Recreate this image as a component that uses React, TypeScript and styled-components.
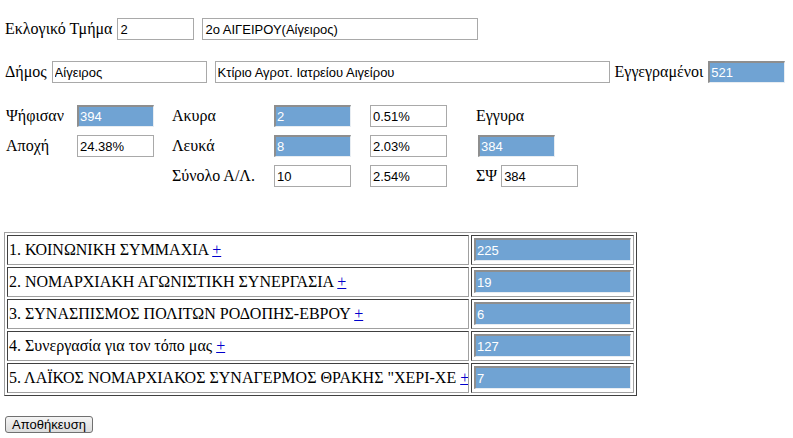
import React from "react";
import styled, { createGlobalStyle } from "styled-components";

const Global = createGlobalStyle`
  html, body { margin: 0; padding: 0; background: #fff; }
  body { font-family: "Liberation Serif", "Times New Roman", serif; font-size: 16px; color: #000; }
`;

const Page = styled.div`
  display: flex;
  flex-direction: column;
  padding: 18px 0 0 5px;
`;

const Row = styled.div<{ $mt?: number }>`
  display: flex;
  align-items: center;
  height: 22px;
  margin-top: ${(p) => p.$mt ?? 0}px;
`;

const Label = styled.span<{ $ml?: number }>`
  font-family: "Liberation Serif", "Times New Roman", serif;
  font-size: 16px;
  margin-left: ${(p) => p.$ml ?? 0}px;
  white-space: nowrap;
`;

const Field = styled.input<{ $w?: number; $blue?: boolean; $ml?: number }>`
  box-sizing: border-box;
  width: ${(p) => p.$w ?? 77}px;
  height: 22px;
  margin: 0 0 0 ${(p) => p.$ml ?? 0}px;
  padding: 0 2px;
  font-family: "Liberation Sans", Arial, sans-serif;
  font-size: 13px;
  outline: none;
  ${(p) =>
    p.$blue
      ? `
    background: #70a3d3;
    color: #fff;
    border-style: solid;
    border-width: 2px 1px 1px 2px;
    border-color: #8e8e8e #e8edf2 #e8edf2 #8e8e8e;
    padding-left: 1px;
  `
      : `
    background: #fff;
    color: #000;
    border: 1px solid #a9a9a9;
  `}
`;

const Stats = styled.div`
  display: grid;
  grid-template-columns: 71px 95px 102px 96px 106px auto;
  grid-auto-rows: 22px;
  row-gap: 8px;
  align-items: center;
  margin-top: 22px;
  margin-left: 1px;
`;

const Cell = styled.div`
  display: flex;
  align-items: center;
`;

const Table = styled.table`
  margin-top: 45px;
  margin-left: -1px;
  border-collapse: separate;
  border-spacing: 2px;
  border-style: solid;
  border-width: 1px;
  border-color: #a0a0a0 #404040 #404040 #a0a0a0;
  width: 633px;
`;

const NameCell = styled.td`
  border-style: solid;
  border-width: 1px;
  border-color: #404040 #a0a0a0 #a0a0a0 #404040;
  padding: 0 0 0 1px;
  width: 459px;
  height: 28px;
  white-space: nowrap;
  overflow: hidden;
  font-family: "Liberation Serif", "Times New Roman", serif;
  font-size: 16px;
  vertical-align: middle;
  max-width: 459px;
`;

const VoteCell = styled.td`
  border-style: solid;
  border-width: 1px;
  border-color: #404040 #a0a0a0 #a0a0a0 #404040;
  padding: 2px 2px 3px 2px;
  vertical-align: top;
`;

const VoteInput = styled(Field)`
  display: block;
  width: 157px;
  height: 23px;
`;

const Plus = styled.a`
  color: #0000cc;
  text-decoration: underline;
`;

const SaveButton = styled.button`
  align-self: flex-start;
  margin-top: 20px;
  height: 17px;
  width: 88px;
  padding: 0;
  font-family: "Liberation Sans", Arial, sans-serif;
  font-size: 13px;
  color: #000;
  border: 1px solid #707070;
  border-radius: 3px;
  background: linear-gradient(#f4f4f4, #dcdcdc);
  line-height: 15px;
`;

const parties = [
  { name: "1. ΚΟΙΝΩΝΙΚΗ ΣΥΜΜΑΧΙΑ", v: "225" },
  { name: "2. ΝΟΜΑΡΧΙΑΚΗ ΑΓΩΝΙΣΤΙΚΗ ΣΥΝΕΡΓΑΣΙΑ", v: "19" },
  { name: "3. ΣΥΝΑΣΠΙΣΜΟΣ ΠΟΛΙΤΩΝ ΡΟΔΟΠΗΣ-ΕΒΡΟΥ", v: "6" },
  { name: "4. Συνεργασία για τον τόπο μας", v: "127" },
  { name: "5. ΛΑΪΚΟΣ ΝΟΜΑΡΧΙΑΚΟΣ ΣΥΝΑΓΕΡΜΟΣ ΘΡΑΚΗΣ \"ΧΕΡΙ-ΧΕ", v: "7" },
];

export default function App() {
  return (
    <>
      <Global />
      <Page>
        <Row>
          <Label>Εκλογικό Τμήμα</Label>
          <Field $ml={5} defaultValue="2" />
          <Field $ml={8} $w={276} defaultValue="2ο ΑΙΓΕΙΡΟΥ(Αίγειρος)" />
        </Row>
        <Row $mt={21}>
          <Label>Δήμος</Label>
          <Field $ml={5} $w={155} defaultValue="Αίγειρος" />
          <Field $ml={8} $w={395} defaultValue="Κτίριο Αγροτ. Ιατρείου Αιγείρου" />
          <Label $ml={5}>Εγγεγραμένοι</Label>
          <Field $ml={5} $blue defaultValue="521" />
        </Row>
        <Stats>
          <Cell><Label>Ψήφισαν</Label></Cell>
          <Cell><Field $blue defaultValue="394" /></Cell>
          <Cell><Label>Ακυρα</Label></Cell>
          <Cell><Field $blue defaultValue="2" /></Cell>
          <Cell><Field defaultValue="0.51%" /></Cell>
          <Cell><Label>Εγγυρα</Label></Cell>

          <Cell><Label>Αποχή</Label></Cell>
          <Cell><Field defaultValue="24.38%" /></Cell>
          <Cell><Label>Λευκά</Label></Cell>
          <Cell><Field $blue defaultValue="8" /></Cell>
          <Cell><Field defaultValue="2.03%" /></Cell>
          <Cell><Field $blue $ml={2} defaultValue="384" /></Cell>

          <Cell />
          <Cell />
          <Cell><Label>Σύνολο Α/Λ.</Label></Cell>
          <Cell><Field defaultValue="10" /></Cell>
          <Cell><Field defaultValue="2.54%" /></Cell>
          <Cell>
            <Label>ΣΨ</Label>
            <Field $ml={4} defaultValue="384" />
          </Cell>
        </Stats>
        <Table>
          <tbody>
            {parties.map((p) => (
              <tr key={p.name}>
                <NameCell>
                  {p.name} <Plus href="#">+</Plus>
                </NameCell>
                <VoteCell>
                  <VoteInput $blue defaultValue={p.v} />
                </VoteCell>
              </tr>
            ))}
          </tbody>
        </Table>
        <SaveButton>Αποθήκευση</SaveButton>
      </Page>
    </>
  );
}
